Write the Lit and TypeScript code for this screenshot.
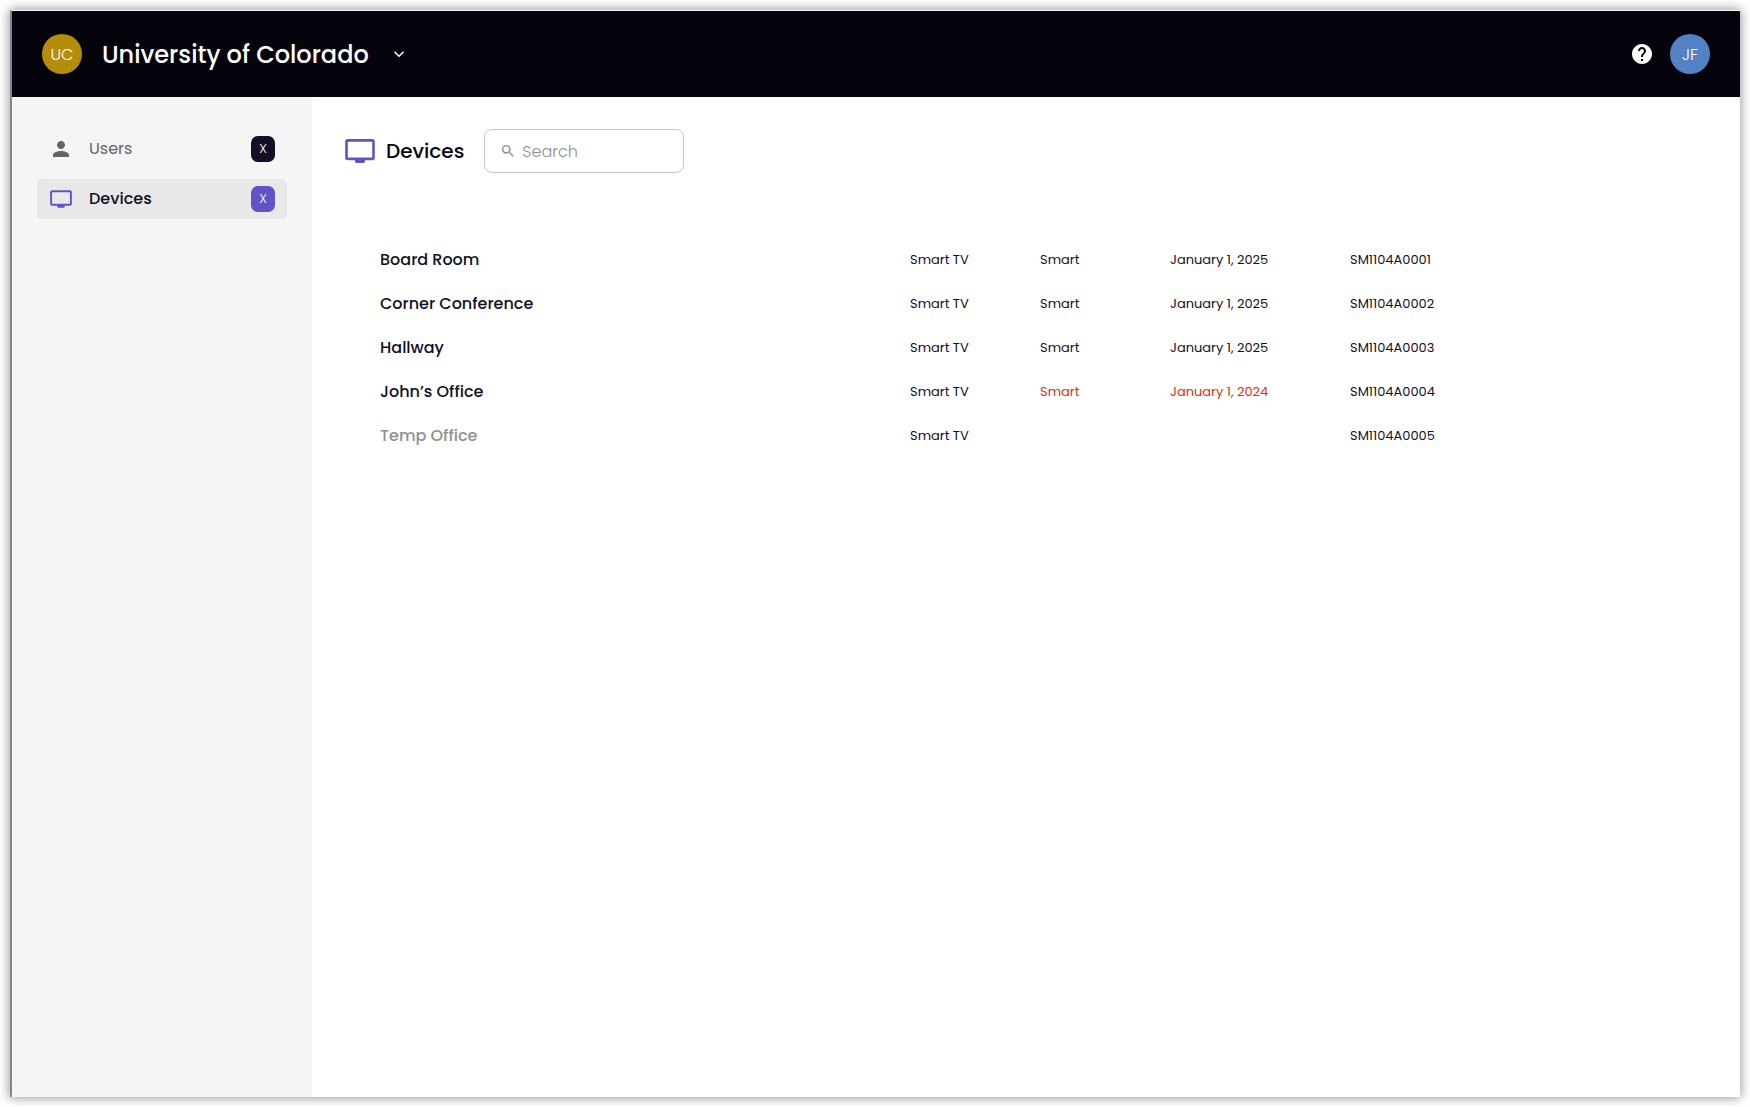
import { LitElement, html, css, svg, nothing } from "lit";
import { customElement, property } from "lit/decorators.js";
import { classMap } from "lit/directives/class-map.js";

interface Device {
  name: string;
  type: string;
  plan?: string;
  date?: string;
  serial: string;
  expired?: boolean;
}

const DEVICES: Device[] = [
  { name: "Board Room", type: "Smart TV", plan: "Smart", date: "January 1, 2025", serial: "SM1104A0001" },
  { name: "Corner Conference", type: "Smart TV", plan: "Smart", date: "January 1, 2025", serial: "SM1104A0002" },
  { name: "Hallway", type: "Smart TV", plan: "Smart", date: "January 1, 2025", serial: "SM1104A0003" },
  { name: "John’s Office", type: "Smart TV", plan: "Smart", date: "January 1, 2024", serial: "SM1104A0004", expired: true },
  { name: "Temp Office", type: "Smart TV", serial: "SM1104A0005" },
];

const monitor = svg`
  <path fill-rule="evenodd" fill="currentColor"
    d="M2.8 0H27.2A2.6 2.6 0 0 1 29.8 2.6V18.6A2.6 2.6 0 0 1 27.2 21.2H20V22.6A1.4 1.4 0 0 1 18.6 24H11.4A1.4 1.4 0 0 1 10 22.6V21.2H2.8A2.6 2.6 0 0 1 .2 18.6V2.6A2.6 2.6 0 0 1 2.8 0ZM3.4 2.7A.6.6 0 0 0 2.8 3.3V17.9A.6.6 0 0 0 3.4 18.5H26.6A.6.6 0 0 0 27.2 17.9V3.3A.6.6 0 0 0 26.6 2.7Z"/>`;

@customElement("top-bar")
export class TopBar extends LitElement {
  static styles = css`
    :host {
      display: flex;
      align-items: center;
      justify-content: space-between;
      height: 86px;
      padding: 0 30px;
      background: #05040d;
      color: #fff;
    }
    .group {
      display: flex;
      align-items: center;
      gap: 20px;
    }
    .actions {
      gap: 18px;
    }
    button {
      display: flex;
      align-items: center;
      padding: 0;
      border: 0;
      background: none;
      color: inherit;
      font: inherit;
      cursor: pointer;
    }
    .avatar {
      display: flex;
      align-items: center;
      justify-content: center;
      width: 40px;
      height: 40px;
      border-radius: 50%;
      background: #b58d0b;
      font-size: 16px;
      font-weight: 300;
    }
    .avatar.user {
      background: #5382c4;
    }
    .org {
      gap: 24px;
      font-size: 24px;
      font-weight: 500;
    }
  `;

  render() {
    return html`
      <div class="group">
        <span class="avatar">UC</span>
        <button class="org" aria-haspopup="menu">
          University of Colorado
          <svg width="12" height="12" viewBox="0 0 12 12" fill="none" stroke="currentColor" stroke-width="1.5">
            <path d="M1.5 3.7 6 8.2l4.5-4.5" />
          </svg>
        </button>
      </div>
      <div class="group actions">
        <button aria-label="Help">
          <svg width="20" height="20" viewBox="2 2 20 20" fill="currentColor">
            <path d="M12 2C6.48 2 2 6.48 2 12s4.48 10 10 10 10-4.48 10-10S17.52 2 12 2zm1 17h-2v-2h2v2zm2.07-7.75-.9.92C13.45 12.9 13 13.5 13 15h-2v-.5c0-1.1.45-2.1 1.17-2.83l1.24-1.26c.37-.36.59-.86.59-1.41 0-1.1-.9-2-2-2s-2 .9-2 2H8c0-2.21 1.79-4 4-4s4 1.79 4 4c0 .88-.36 1.68-.93 2.25z" />
          </svg>
        </button>
        <button class="avatar user">JF</button>
      </div>
    `;
  }
}

@customElement("side-nav")
export class SideNav extends LitElement {
  static styles = css`
    :host {
      display: block;
      box-sizing: border-box;
      width: 300px;
      padding: 32px 25px;
      background: #f5f5f5;
    }
    nav {
      display: flex;
      flex-direction: column;
      gap: 10px;
    }
    .item {
      display: flex;
      align-items: center;
      height: 40px;
      padding: 0 12px;
      border-radius: 5px;
      color: #646468;
      font-size: 16px;
      line-height: 24px;
      text-decoration: none;
    }
    .item.current {
      background: #e8e8e8;
      color: #120f26;
      font-weight: 500;
    }
    .icon {
      display: flex;
      justify-content: center;
      width: 24px;
      margin-right: 16px;
      color: #646468;
    }
    .current .icon {
      color: #5f53c6;
    }
    .label {
      flex: 1;
    }
    .badge {
      display: flex;
      align-items: center;
      justify-content: center;
      width: 24px;
      height: 26px;
      border-radius: 7px;
      background: #120f26;
      color: #fff;
      font-size: 13px;
      font-weight: 300;
    }
    .current .badge {
      background: #5f53c6;
    }
  `;

  render() {
    return html`
      <nav aria-label="Main">
        <a class="item" href="#users">
          <span class="icon">
            <svg width="16" height="16" viewBox="4 4 16 16" fill="currentColor">
              <path d="M12 12c2.21 0 4-1.79 4-4s-1.79-4-4-4-4 1.79-4 4 1.79 4 4 4zm0 2c-2.67 0-8 1.34-8 4v2h16v-2c0-2.66-5.33-4-8-4z" />
            </svg>
          </span>
          <span class="label">Users</span>
          <span class="badge">X</span>
        </a>
        <a class="item current" href="#devices" aria-current="page">
          <span class="icon"><svg width="22" height="18" viewBox="0 0 30 24">${monitor}</svg></span>
          <span class="label">Devices</span>
          <span class="badge">X</span>
        </a>
      </nav>
    `;
  }
}

@customElement("device-table")
export class DeviceTable extends LitElement {
  static styles = css`
    :host {
      display: block;
    }
    table {
      width: 100%;
      table-layout: fixed;
      border-collapse: collapse;
    }
    th,
    td {
      height: 44px;
      padding: 0;
      text-align: left;
      font-size: 13px;
      font-weight: 400;
      line-height: 22px;
      white-space: nowrap;
    }
    th {
      font-size: 16px;
      font-weight: 500;
      line-height: 24px;
    }
    .short {
      width: 130px;
    }
    .date {
      width: 180px;
    }
    .serial {
      width: 390px;
    }
    .inactive {
      color: #909090;
    }
    .expired {
      color: #d8310f;
    }
  `;

  @property({ attribute: false }) devices: Device[] = [];

  render() {
    return html`
      <table aria-label="Devices">
        <colgroup>
          <col />
          <col class="short" />
          <col class="short" />
          <col class="date" />
          <col class="serial" />
        </colgroup>
        <tbody>
          ${this.devices.map((d) => {
            const term = classMap({ expired: !!d.expired });
            return html`
              <tr>
                <th scope="row" class=${classMap({ inactive: !d.plan })}>${d.name}</th>
                <td>${d.type}</td>
                <td class=${term}>${d.plan ?? nothing}</td>
                <td class=${term}>${d.date ?? nothing}</td>
                <td>${d.serial}</td>
              </tr>
            `;
          })}
        </tbody>
      </table>
    `;
  }
}

@customElement("app-root")
export class AppRoot extends LitElement {
  static styles = css`
    :host {
      display: flex;
      box-sizing: border-box;
      min-height: 100vh;
      padding: 10px;
      background: #fff;
      color: #120f26;
      font-family: Poppins, Inter, "Liberation Sans", sans-serif;
    }
    .window {
      display: flex;
      flex: 1;
      flex-direction: column;
      border-top: 1px solid #f4f6f8;
      border-left: 2px solid #868686;
      background: #fff;
      box-shadow: 0 0 10px 1px rgba(0, 0, 0, 0.4);
    }
    .body {
      display: flex;
      flex: 1;
    }
    main {
      flex: 1;
      min-width: 0;
      padding: 32px 0 32px 30px;
    }
    .heading {
      display: flex;
      align-items: center;
      padding-left: 3px;
    }
    .heading svg {
      color: #5f53c6;
    }
    h1 {
      margin: 0 20px 0 11px;
      color: #05040d;
      font-size: 20px;
      font-weight: 500;
    }
    .search {
      display: flex;
      align-items: center;
      box-sizing: border-box;
      width: 200px;
      height: 44px;
      padding: 0 17px;
      gap: 8px;
      border: 1px solid #c5c2d5;
      border-radius: 8px;
      color: #909096;
    }
    .search svg {
      flex: none;
      color: #87878d;
    }
    input {
      min-width: 0;
      flex: 1;
      padding: 0;
      border: 0;
      outline: 0;
      background: none;
      color: #120f26;
      font: inherit;
      font-size: 16px;
    }
    input::placeholder {
      color: #8f8f96;
      font-weight: 300;
      opacity: 1;
    }
    device-table {
      padding: 65px 0 0 38px;
    }
  `;

  render() {
    return html`
      <div class="window">
        <top-bar></top-bar>
        <div class="body">
          <side-nav></side-nav>
          <main>
            <div class="heading">
              <svg width="30" height="24" viewBox="0 0 30 24">${monitor}</svg>
              <h1>Devices</h1>
              <label class="search">
                <svg width="12" height="12" viewBox="3 3 18 18" fill="currentColor">
                  <path d="M15.5 14h-.79l-.28-.27A6.47 6.47 0 0 0 16 9.5 6.5 6.5 0 1 0 9.5 16c1.61 0 3.09-.59 4.23-1.57l.27.28v.79l5 4.99L20.49 19l-4.99-5zm-6 0C7.01 14 5 11.99 5 9.5S7.01 5 9.5 5 14 7.01 14 9.5 11.99 14 9.5 14z" />
                </svg>
                <input type="search" placeholder="Search" aria-label="Search" />
              </label>
            </div>
            <device-table .devices=${DEVICES}></device-table>
          </main>
        </div>
      </div>
    `;
  }
}
